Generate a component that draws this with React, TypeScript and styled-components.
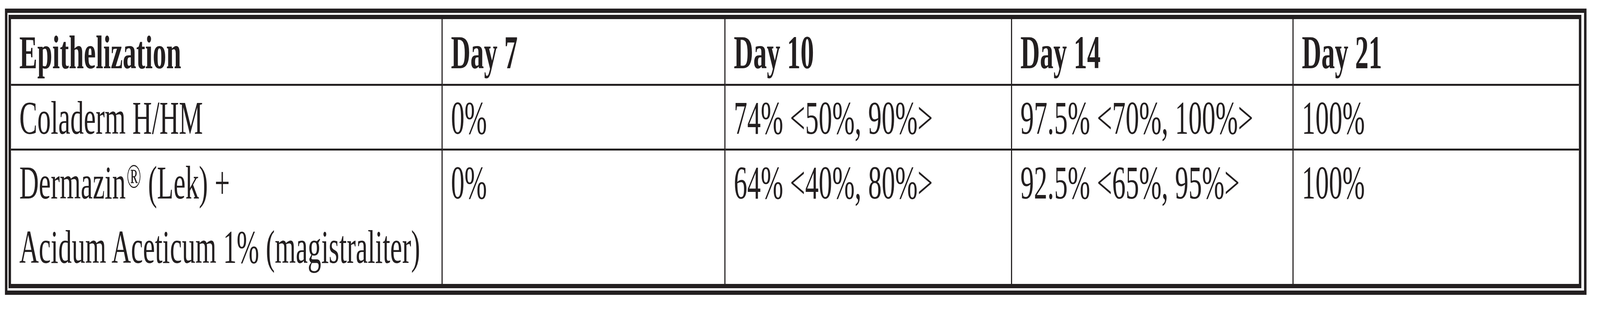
import * as React from 'react'
import styled, { createGlobalStyle } from 'styled-components'

const ink = '#231f20'
const designWidth = 7117

const GlobalStyle = createGlobalStyle`
  * {
    box-sizing: border-box;
  }
  html, body {
    overflow: hidden;
  }
  body {
    margin: 0;
    background: #fff;
    color: ${ink};
    font-family: "Liberation Serif", "Times New Roman", serif;
  }
`

// the table is laid out at the reference width and squeezed to the real window width
const Stage = styled.div`
  width: ${designWidth}px;
  padding: 22px 0 0 22px;
  transform-origin: 0 0;
`

// double rule round the table: thick outer line, white gap, thick inner line
const Frame = styled.div`
  width: 7035px;
  border: 11px solid ${ink};
  padding: 5px 12px 6px 5px;
`

const Inner = styled.div`
  border: 11px solid ${ink};
`

const Grid = styled.div`
  display: grid;
  grid-template-columns: 1920px 1258px 1275px 1252px 1269px;
  grid-template-rows: 171px 166px 342px;
`

const Cell: any = styled.div`
  padding: ${(props: any) => (props.head ? '3px' : '0')} 0 0 37px;
  font-size: 120px;
  line-height: 165px;
  font-weight: ${(props: any) => (props.head ? 700 : 400)};
  white-space: nowrap;
  border-right: ${(props: any) => (props.lastCol ? '0' : `5px solid ${ink}`)};
  border-bottom: ${(props: any) => (props.lastRow ? '0' : `5px solid ${ink}`)};
`

const Mark = styled.sup`
  font-size: 86px;
  line-height: 0;
  vertical-align: 28px;
  margin-left: 4px;
`

const header = ['Epithelization', 'Day 7', 'Day 10', 'Day 14', 'Day 21']

const rows: React.ReactNode[][] = [
  ['Coladerm H/HM', '0%', '74% <50%, 90%>', '97.5% <70%, 100%>', '100%'],
  [
    <>
      Dermazin<Mark>®</Mark> (Lek) +
      <br />
      Acidum Aceticum 1% (magistraliter)
    </>,
    '0%',
    '64% <40%, 80%>',
    '92.5% <65%, 95%>',
    '100%',
  ],
]

const useFit = () => {
  const get = () =>
    typeof window === 'undefined'
      ? 1
      : Math.min(1, window.innerWidth / designWidth)
  const [scale, setScale] = React.useState(get)
  React.useEffect(() => {
    const onResize = () => setScale(get())
    window.addEventListener('resize', onResize)
    return () => window.removeEventListener('resize', onResize)
  }, [])
  return scale
}

export default function App() {
  const scale = useFit()
  return (
    <>
      <GlobalStyle />
      <Stage style={{ transform: `scaleX(${scale})` }}>
        <Frame>
          <Inner>
            <Grid>
              {header.map((title, i) => (
                <Cell key={title} head lastCol={i === header.length - 1}>
                  {title}
                </Cell>
              ))}
              {rows.map((row, r) =>
                row.map((value, c) => (
                  <Cell
                    key={`${r}-${c}`}
                    lastCol={c === row.length - 1}
                    lastRow={r === rows.length - 1}
                  >
                    {value}
                  </Cell>
                )),
              )}
            </Grid>
          </Inner>
        </Frame>
      </Stage>
    </>
  )
}
